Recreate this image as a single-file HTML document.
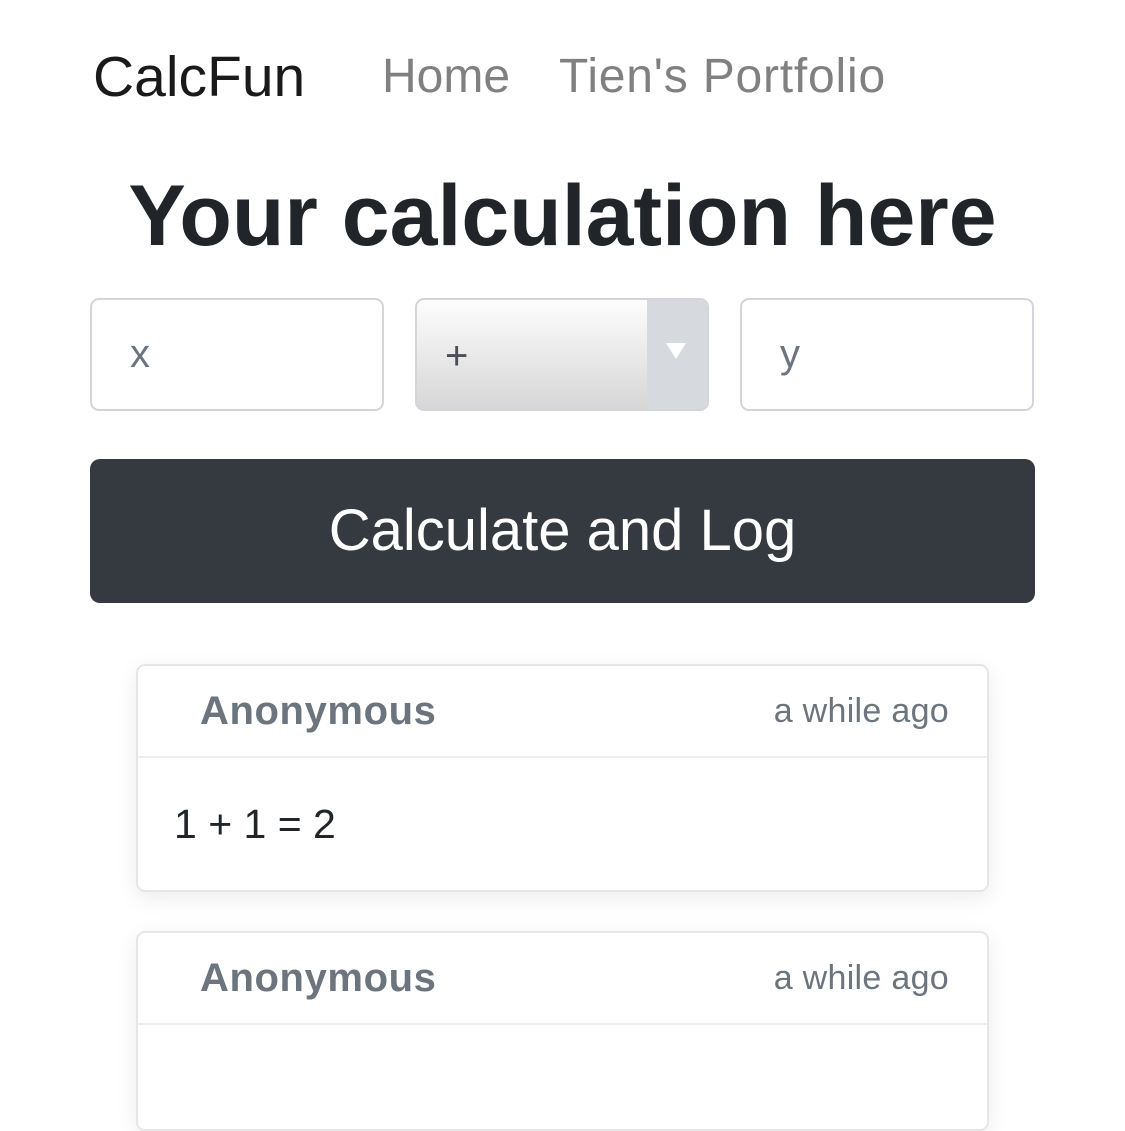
<!DOCTYPE html>
<html><head><meta charset="utf-8"><style>
body{margin:0;width:1125px;height:1048px;background:#fff;font-family:"Liberation Sans",sans-serif;position:relative;overflow:hidden}
.a{position:absolute;white-space:nowrap}
.inp{position:absolute;top:298px;border:2px solid #d3d5da;border-radius:9px;box-sizing:border-box;width:294px;height:113px}
.card{position:absolute;left:136px;width:853px;border:2px solid #e6e6e6;border-radius:9px;box-sizing:border-box;background:#fff;box-shadow:0 6px 22px rgba(0,0,0,.08)}
.hd{height:90px;border-bottom:2px solid #eee;position:relative}
.nm{position:absolute;left:62px;top:0;line-height:90px;font-size:40px;letter-spacing:0.6px;font-weight:bold;color:#6c757d}
.tm{position:absolute;right:38px;top:0;line-height:90px;font-size:34px;letter-spacing:0.3px;color:#6c757d}
</style></head><body>
<div class="a" style="left:93px;top:46px;line-height:62px;font-size:57px;color:#1a1a1a">CalcFun</div>
<div class="a" style="left:382px;top:48px;line-height:58px;font-size:48px;color:#808080">Home</div>
<div class="a" style="left:559px;top:48px;line-height:58px;font-size:48px;letter-spacing:0.8px;color:#808080">Tien's Portfolio</div>
<div class="a" style="left:0;width:1125px;text-align:center;top:166px;line-height:100px;font-size:86px;font-weight:bold;color:#212529">Your calculation here</div>
<div class="inp" style="left:90px"><div class="a" style="left:38px;top:0;line-height:109px;font-size:40px;color:#6c757d">x</div></div>
<div class="inp" style="left:415px;background:linear-gradient(#fdfdfd,#d6d6d6);overflow:hidden">
<div style="position:absolute;right:0;top:0;width:60px;height:100%;background:#d6d9de"></div>
<svg style="position:absolute;right:20px;top:42px" width="22" height="18"><path d="M1 1 L21 1 L11 17 Z" fill="#fff"/></svg>
<div class="a" style="left:28px;top:2px;line-height:109px;font-size:40px;color:#495057">+</div></div>
<div class="inp" style="left:740px"><div class="a" style="left:38px;top:0;line-height:109px;font-size:40px;color:#6c757d">y</div></div>
<div class="a" style="left:90px;top:459px;width:945px;height:144px;background:#343a40;border-radius:10px;color:#fff;font-size:58px;text-align:center;line-height:144px">Calculate and Log</div>
<div class="card" style="top:664px;height:228px"><div class="hd"><div class="nm">Anonymous</div><div class="tm">a while ago</div></div>
<div class="a" style="left:36px;top:128px;font-size:41px;line-height:60px;color:#212529">1 + 1 = 2</div></div>
<div class="card" style="top:931px;height:200px"><div class="hd"><div class="nm">Anonymous</div><div class="tm">a while ago</div></div></div>
</body></html>
